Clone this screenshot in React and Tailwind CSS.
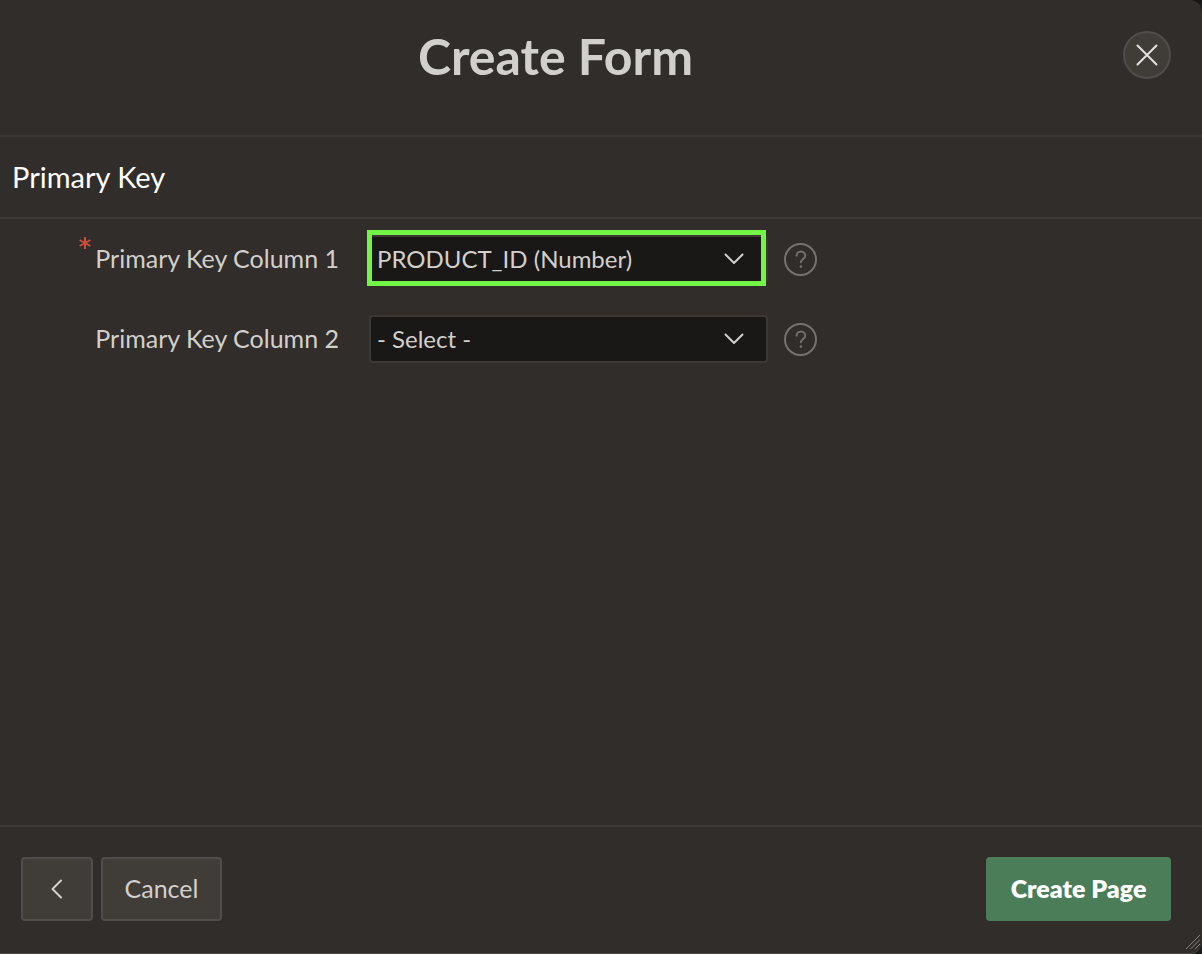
import { useState } from "react";

function HelpButton({ label }) {
  return (
    <button type="button" aria-label={label} className="ml-4 shrink-0 text-[#75726e]">
      <svg viewBox="0 0 34 34" className="size-[34px]" fill="none" stroke="currentColor" strokeWidth="2" strokeLinecap="round" aria-hidden="true">
        <circle cx="16.5" cy="17.5" r="15.5" />
        <path d="M12.6 13.700a4.300 4.300 0 0 1 8.600 0c0 3.400-4.300 3.200-4.300 6.600" strokeWidth="2" />
        <circle cx="16.9" cy="24.600" r="1.300" fill="currentColor" stroke="none" />
      </svg>
    </button>
  );
}

function KeyField({ id, label, options, required, highlighted }) {
  const [value, setValue] = useState(options[0]);
  return (
    <div className="flex h-20 items-center">
      <div className="flex w-[339px] shrink-0 justify-end">
        <label htmlFor={id} className="relative text-[25px] text-[#d2d0cc]">
          {label}
          {required && (
            <svg viewBox="0 0 12 12" className="absolute -top-[3px] -left-4 size-3" stroke="#c74f3b" strokeWidth="2" aria-hidden="true">
              <path d="M6 0v12M.6 3l10.800 6M11.400 3 .6 9" />
            </svg>
          )}
        </label>
      </div>
      <div className="relative ml-[30px] w-[399px]">
        <select
          id={id}
          value={value}
          required={required}
          onChange={(e) => setValue(e.target.value)}
          className="block h-12 w-full appearance-none rounded-sm border-2 border-[#3b3835] bg-[#191816] pr-12 pl-1.5 text-2xl text-[#d2d0cc]"
        >
          {options.map((o) => (
            <option key={o}>{o}</option>
          ))}
        </select>
        <svg viewBox="0 0 20 12" className="pointer-events-none absolute top-[18px] right-6 h-3 w-5" fill="none" stroke="#d2d0cc" strokeWidth="2" strokeLinecap="round" strokeLinejoin="round" aria-hidden="true">
          <path d="M1.5 1.5 10 10l8.500-8.500" />
        </svg>
        {highlighted && (
          <div className="pointer-events-none absolute -top-[5px] -bottom-[3px] -left-0.5 right-0.5 border-[5px] border-[#72f545]" />
        )}
      </div>
      <HelpButton label={`Help for ${label}`} />
    </div>
  );
}

export default function App() {
  return (
    <div className="min-h-screen bg-[#191816] font-['Lato','Noto_Sans',sans-serif]">
      <div className="flex min-h-screen flex-col rounded-r-xl border-b border-[#4b4845] bg-[#312d2a]">
        <header className="flex h-[137px] items-start border-b-2 border-[#3d3a37] pt-[31px] pr-[31px]">
          <h1 className="flex-1 pr-3 text-center text-[50px] leading-[50px] font-bold text-[#d2d0cc]">Create Form</h1>
          <button type="button" aria-label="Close" className="flex size-12 items-center justify-center rounded-full border-2 border-[#504d4a] bg-[#403c38] text-[#e4e2df]">
            <svg viewBox="0 0 22 22" className="size-[22px]" stroke="currentColor" strokeWidth="2" strokeLinecap="round" aria-hidden="true">
              <path d="M1.500 1.500l19 19M20.500 1.500l-19 19" />
            </svg>
          </button>
        </header>
        <main className="flex-1">
          <h2 className="flex h-[82px] items-center border-b-2 border-[#3d3a37] px-3 text-[29px] text-white">Primary Key</h2>
          <KeyField id="pk1" label="Primary Key Column 1" options={["PRODUCT_ID (Number)"]} required highlighted />
          <KeyField id="pk2" label="Primary Key Column 2" options={["- Select -"]} />
        </main>
        <footer className="relative flex gap-2 border-t-2 border-[#3d3a37] pt-[30px] pr-[31px] pb-8 pl-[21px] text-[25px]">
          <button type="button" aria-label="Previous" className="flex h-16 w-[72px] items-center justify-center rounded-sm border-2 border-[#504d4a] bg-[#403c38] text-[#d2d0cc]">
            <svg viewBox="0 0 12 20" className="h-5 w-3" fill="none" stroke="currentColor" strokeWidth="2" strokeLinecap="round" strokeLinejoin="round" aria-hidden="true">
              <path d="M10 1.500 1.500 10l8.500 8.500" />
            </svg>
          </button>
          <button type="button" className="h-16 w-[121px] rounded-sm border-2 border-[#504d4a] bg-[#403c38] text-[#d2d0cc]">Cancel</button>
          <button type="button" className="ml-auto h-16 w-[185px] rounded-sm bg-[#4a7d58] font-extrabold text-white">Create Page</button>
          <svg viewBox="0 0 14 14" className="absolute right-0.5 bottom-1 size-3.5" stroke="#85827e" strokeWidth="1" aria-hidden="true">
            <path d="M0 14 14 0M4.500 14 14 4.500M9 14l5-5" />
          </svg>
        </footer>
      </div>
    </div>
  );
}
